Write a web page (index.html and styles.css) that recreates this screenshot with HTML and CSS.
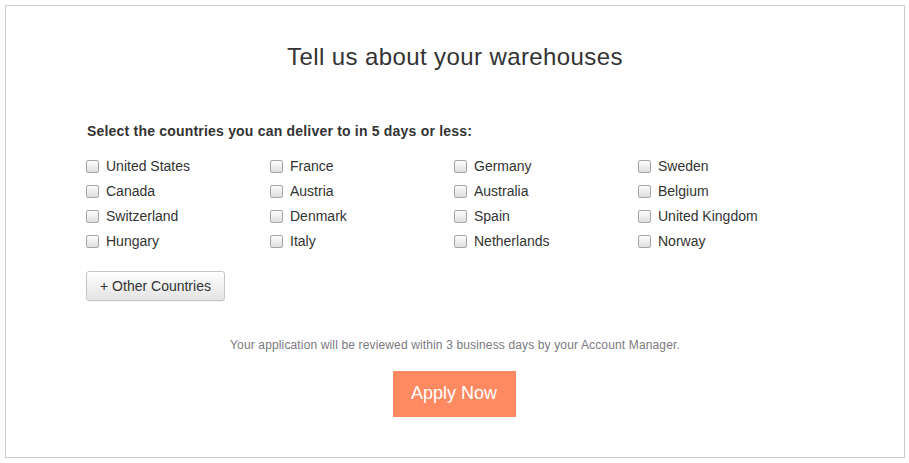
FILE: index.html
```html
<!DOCTYPE html>
<html>
<head>
<meta charset="utf-8">
<link rel="stylesheet" href="styles.css">
</head>
<body>
<div class="panel">
  <h1 class="title">Tell us about your warehouses</h1>
  <p class="prompt">Select the countries you can deliver to in 5 days or less:</p>
  <div class="countries">
    <label class="country"><input type="checkbox" class="cb"><span>United States</span></label>
    <label class="country"><input type="checkbox" class="cb"><span>France</span></label>
    <label class="country"><input type="checkbox" class="cb"><span>Germany</span></label>
    <label class="country"><input type="checkbox" class="cb"><span>Sweden</span></label>
    <label class="country"><input type="checkbox" class="cb"><span>Canada</span></label>
    <label class="country"><input type="checkbox" class="cb"><span>Austria</span></label>
    <label class="country"><input type="checkbox" class="cb"><span>Australia</span></label>
    <label class="country"><input type="checkbox" class="cb"><span>Belgium</span></label>
    <label class="country"><input type="checkbox" class="cb"><span>Switzerland</span></label>
    <label class="country"><input type="checkbox" class="cb"><span>Denmark</span></label>
    <label class="country"><input type="checkbox" class="cb"><span>Spain</span></label>
    <label class="country"><input type="checkbox" class="cb"><span>United Kingdom</span></label>
    <label class="country"><input type="checkbox" class="cb"><span>Hungary</span></label>
    <label class="country"><input type="checkbox" class="cb"><span>Italy</span></label>
    <label class="country"><input type="checkbox" class="cb"><span>Netherlands</span></label>
    <label class="country"><input type="checkbox" class="cb"><span>Norway</span></label>
  </div>
  <div class="more-row"><button class="btn-more">+ Other Countries</button></div>
  <p class="note">Your application will be reviewed within 3 business days by your Account Manager.</p>
  <div class="apply-row"><button class="btn-apply">Apply Now</button></div>
</div>
</body>
</html>
```

FILE: styles.css
```css
html, body {
  margin: 0;
  padding: 0;
  background: #fff;
}
body {
  font-family: "Liberation Sans", Arial, sans-serif;
  color: #333;
}
.panel {
  box-sizing: border-box;
  width: 900px;
  height: 453px;
  margin: 5px;
  border: 1px solid #cccccc;
  padding: 38px 80px 0 80px;
  display: flex;
  flex-direction: column;
}
.title {
  margin: 0;
  font-size: 24px;
  font-weight: normal;
  line-height: 26.4px;
  letter-spacing: 0.4px;
  text-align: center;
  color: #333;
}
.prompt {
  margin: 51px 0 0 1px;
  font-size: 14px;
  font-weight: bold;
  line-height: 20px;
  letter-spacing: 0.2px;
}
.countries {
  margin-top: 12.5px;
  display: grid;
  grid-template-columns: repeat(4, 184px);
  grid-auto-rows: 25px;
}
.country {
  display: flex;
  align-items: center;
  font-size: 14px;
  line-height: 25px;
}
.cb {
  appearance: none;
  -webkit-appearance: none;
  box-sizing: border-box;
  width: 13px;
  height: 13px;
  margin: 0 7px 0 0;
  border: 1px solid #a6a6a6;
  border-radius: 2px;
  background: linear-gradient(#fcfcfc, #dedede);
}
.more-row {
  margin-top: 17px;
  display: flex;
}
.btn-more {
  box-sizing: border-box;
  height: 30px;
  width: 139px;
  padding: 0;
  font-family: "Liberation Sans", Arial, sans-serif;
  font-size: 14px;
  color: #333;
  border: 1px solid #c6c6c6;
  border-radius: 3px;
  background: linear-gradient(#ffffff, #e3e3e3);
  box-shadow: 0 1px 1px rgba(0,0,0,0.06);
}
.note {
  margin: 36.5px 0 0 0;
  font-size: 12px;
  line-height: 17px;
  letter-spacing: 0.14px;
  color: #7a7a80;
  text-align: center;
}
.apply-row {
  margin-top: 16.5px;
  display: flex;
  justify-content: center;
}
.btn-apply {
  width: 123px;
  height: 46px;
  border: none;
  padding: 0;
  margin-right: 2px;
  background: #ff8a62;
  color: #fff;
  font-family: "Liberation Sans", Arial, sans-serif;
  font-size: 18px;
}
```
